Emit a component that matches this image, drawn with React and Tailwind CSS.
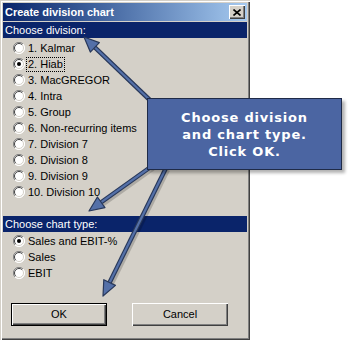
import React from "react";

const divisions = [
  "1. Kalmar",
  "2. Hiab",
  "3. MacGREGOR",
  "4. Intra",
  "5. Group",
  "6. Non-recurring items",
  "7. Division 7",
  "8. Division 8",
  "9. Division 9",
  "10. Division 10",
];

const chartTypes = ["Sales and EBIT-%", "Sales", "EBIT"];

function Radio({ checked }) {
  return (
    <svg width="12" height="12" viewBox="0 0 12 12" className="shrink-0">
      <circle cx="6" cy="6" r="5.5" fill="#ffffff" />
      <path d="M10 2 A5.5 5.5 0 0 0 2 10" stroke="#808080" strokeWidth="1" fill="none" />
      <path d="M9.2 2.8 A4.5 4.5 0 0 0 2.8 9.2" stroke="#404040" strokeWidth="1" fill="none" />
      <path d="M2 10 A5.5 5.5 0 0 0 10 2" stroke="#ffffff" strokeWidth="1" fill="none" />
      <path d="M2.8 9.2 A4.5 4.5 0 0 0 9.2 2.8" stroke="#d4d0c8" strokeWidth="1" fill="none" />
      {checked && <circle cx="6" cy="6" r="2" fill="#000000" />}
    </svg>
  );
}

function Option({ label, checked, focused }) {
  return (
    <div className="h-4 flex items-center pl-[10px] gap-[1px]">
      <Radio checked={checked} />
      <span
        className={
          focused
            ? "leading-[13px] px-[1px] border border-dotted border-black"
            : "leading-[13px] px-[2px]"
        }
      >
        {label}
      </span>
    </div>
  );
}

function Button({ children, primary }) {
  return (
    <div
      className={
        "w-[96px] h-[23px] flex items-center justify-center bg-[#d4d0c8] " +
        (primary
          ? "border border-black shadow-[inset_1px_1px_0_#ffffff,inset_-1px_-1px_0_#404040,inset_-2px_-2px_0_#808080]"
          : "shadow-[inset_1px_1px_0_#ffffff,inset_-1px_-1px_0_#404040,inset_-2px_-2px_0_#808080]")
      }
    >
      {children}
    </div>
  );
}

function Arrow({ x1, y1, x2, y2 }) {
  const dx = x2 - x1;
  const dy = y2 - y1;
  const len = Math.hypot(dx, dy);
  const ux = dx / len;
  const uy = dy / len;
  const hl = 15;
  const hw = 6.5;
  const bx = x2 - ux * hl;
  const by = y2 - uy * hl;
  const pts = `${x2},${y2} ${bx - uy * hw},${by + ux * hw} ${bx + uy * hw},${by - ux * hw}`;
  return (
    <g>
      <line x1={x1 + 2} y1={y1 + 2} x2={bx + 2} y2={by + 2} stroke="rgba(0,0,0,0.18)" strokeWidth="4" />
      <line x1={x1} y1={y1} x2={bx} y2={by} stroke="#28385a" strokeWidth="4.5" />
      <line x1={x1} y1={y1} x2={bx + ux * 2} y2={by + uy * 2} stroke="#5470a8" strokeWidth="2.2" />
      <polygon points={pts} fill="#5470a8" stroke="#28385a" strokeWidth="1.2" strokeLinejoin="round" />
    </g>
  );
}

export default function App() {
  return (
    <div className="relative w-[350px] h-[341px] bg-white overflow-hidden font-['Liberation_Sans',Arial,sans-serif] text-[11px] text-black">
      {/* Dialog window */}
      <div className="w-[250px] h-[340px] bg-[#d4d0c8] p-[3px] flex flex-col shadow-[inset_1px_1px_0_#d4d0c8,inset_2px_2px_0_#ffffff,inset_-1px_-1px_0_#404040,inset_-2px_-2px_0_#808080]">
        <div className="h-[18px] flex items-center justify-between pl-[2px] pr-[2px] bg-gradient-to-r from-[#0a246a] to-[#a6caf0]">
          <span className="text-white font-bold text-[11px]">Create division chart</span>
          <div className="w-4 h-[14px] bg-[#d4d0c8] flex items-center justify-center shadow-[inset_1px_1px_0_#ffffff,inset_-1px_-1px_0_#404040,inset_-2px_-2px_0_#808080]">
            <svg width="8" height="7" viewBox="0 0 8 7">
              <path d="M0.5 0.5 L7.5 6.5 M7.5 0.5 L0.5 6.5" stroke="#000" strokeWidth="1.6" />
            </svg>
          </div>
        </div>

        <div className="mt-[1px] h-4 bg-[#0a246a] text-white pl-[2px] flex items-center">Choose division:</div>
        <div className="pt-[2px]">
          {divisions.map((d, i) => (
            <Option key={d} label={d} checked={i === 1} focused={i === 1} />
          ))}
        </div>

        <div className="mt-4 h-4 bg-[#0a246a] text-white pl-[2px] flex items-center">Choose chart type:</div>
        <div className="pt-[1px]">
          {chartTypes.map((c, i) => (
            <Option key={c} label={c} checked={i === 0} />
          ))}
        </div>

        <div className="mt-[22px] flex gap-[25px] pl-[8px]">
          <Button primary>OK</Button>
          <Button>Cancel</Button>
        </div>
      </div>

      {/* Pointer arrows */}
      <svg className="absolute inset-0" width="350" height="341">
        <Arrow x1={154} y1={104} x2={84} y2={37} />
        <Arrow x1={152} y1={166} x2={89} y2={211} />
        <Arrow x1={166} y1={168} x2={103} y2={296} />
      </svg>

      {/* Callout */}
      <div className="absolute left-[147px] top-[98px] w-[195px] h-[72px] bg-[#4b65a2] border border-[#1f2b48] shadow-[3px_3px_3px_rgba(0,0,0,0.3)] flex items-center justify-center text-center text-white font-bold text-[13px] leading-[17px] tracking-[0.8px] font-['DejaVu_Sans',Verdana,sans-serif]">
        <div>
          Choose division
          <br />
          and chart type.
          <br />
          Click OK.
        </div>
      </div>
    </div>
  );
}
